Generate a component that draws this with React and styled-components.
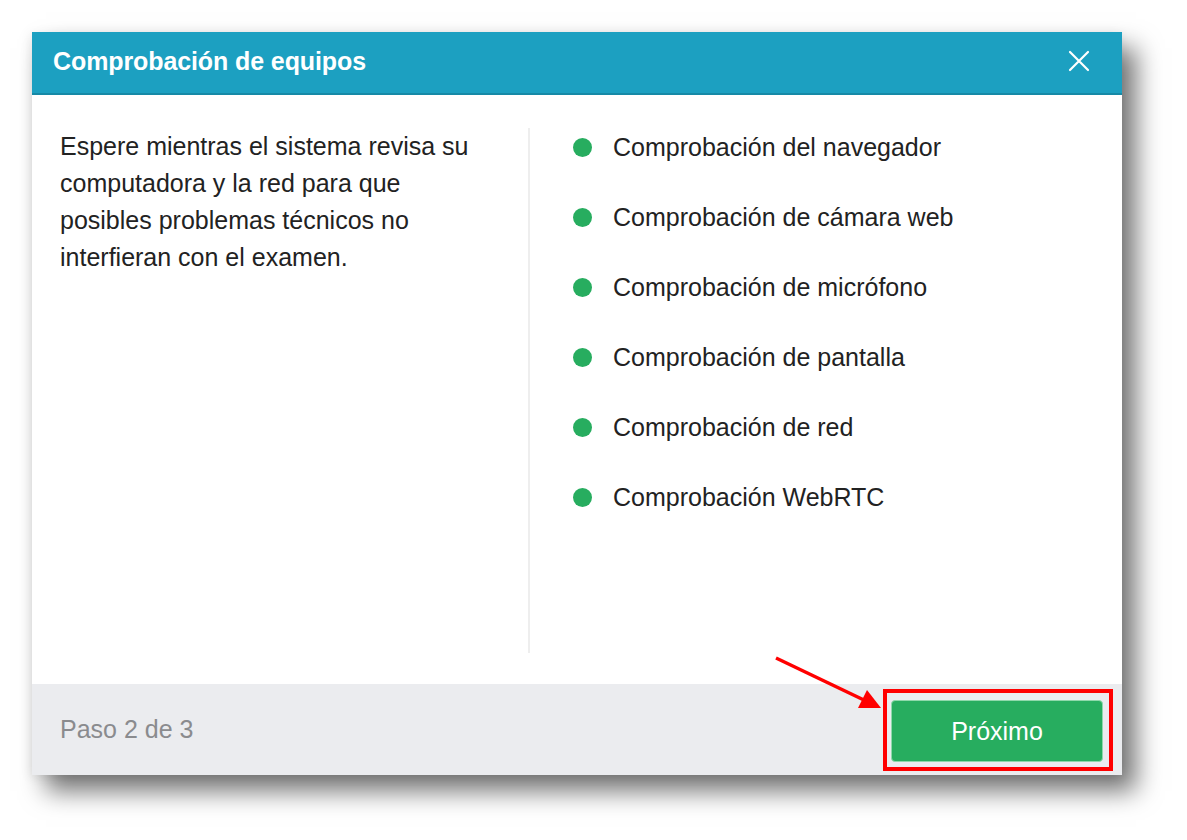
import React from 'react'
import styled, { createGlobalStyle } from 'styled-components'

const GlobalStyle = createGlobalStyle`
  html, body {
    margin: 0;
    padding: 0;
    background: #ffffff;
    font-family: "Liberation Sans", Arial, sans-serif;
  }
  * {
    box-sizing: border-box;
  }
`

const Page = styled.div`
  width: 1187px;
  height: 840px;
  padding: 32px 0 0 32px;
  position: relative;
  overflow: hidden;
`

const Modal = styled.div`
  width: 1090px;
  height: 743px;
  background: #ffffff;
  display: flex;
  flex-direction: column;
  box-shadow: 14px 16px 24px rgba(0, 0, 0, 0.55), -2px 2px 10px rgba(0, 0, 0, 0.08);
`

const Header = styled.div`
  flex: 0 0 63px;
  background: #1ca0c1;
  border-bottom: 2px solid #1689a6;
  display: flex;
  align-items: center;
  justify-content: space-between;
  padding: 0 32px 3px 21px;
  color: #ffffff;
`

const Title = styled.span`
  font-size: 25px;
  font-weight: bold;
  letter-spacing: -0.1px;
`

const CloseButton = styled.button`
  border: none;
  background: transparent;
  padding: 0;
  width: 22px;
  height: 22px;
  cursor: pointer;
  display: flex;
  svg {
    display: block;
  }
`

const Body = styled.div`
  flex: 1 1 auto;
  display: flex;
  padding: 33px 0 31px 28px;
  color: #222222;
`

const Intro = styled.p`
  margin: 0;
  width: 470px;
  padding-right: 40px;
  font-size: 25px;
  line-height: 37px;
  border-right: 2px solid #eeeeee;
`

const CheckList = styled.ul`
  list-style: none;
  margin: 0;
  padding: 0 0 0 43px;
  display: flex;
  flex-direction: column;
  gap: 32px;
`

const CheckItem = styled.li`
  display: flex;
  align-items: center;
  gap: 21px;
  height: 38px;
  font-size: 25px;
`

const Dot = styled.span`
  width: 19px;
  height: 19px;
  border-radius: 50%;
  background: ${p => p.color};
  flex: 0 0 auto;
`

const Footer = styled.div`
  flex: 0 0 91px;
  background: #ebecef;
  display: flex;
  align-items: center;
  justify-content: space-between;
  padding: 0 19px 0 28px;
`

const StepText = styled.span`
  font-size: 25px;
  color: #8a8b8e;
`

const ButtonWrap = styled.div`
  position: relative;
  margin-top: 3px;
`

const NextButton = styled.button`
  width: 212px;
  height: 62px;
  border: 1px solid #8fd9ab;
  border-radius: 4px;
  background: #27ad5f;
  color: #ffffff;
  font-family: "Liberation Sans", Arial, sans-serif;
  font-size: 25px;
  cursor: pointer;
`

const Highlight = styled.div`
  position: absolute;
  top: -11px;
  left: -8px;
  right: -10px;
  bottom: -9px;
  border: 4px solid #ff0000;
  pointer-events: none;
`

const Arrow = styled.svg`
  position: absolute;
  left: 770px;
  top: 650px;
  overflow: visible;
`

const checks = [
  'Comprobación del navegador',
  'Comprobación de cámara web',
  'Comprobación de micrófono',
  'Comprobación de pantalla',
  'Comprobación de red',
  'Comprobación WebRTC',
]

export default function App() {
  return (
    <>
      <GlobalStyle />
      <Page>
        <Modal>
          <Header>
            <Title>Comprobación de equipos</Title>
            <CloseButton aria-label="Cerrar">
              <svg width="22" height="22" viewBox="0 0 22 22">
                <path d="M2 2 L20 20 M20 2 L2 20" stroke="#ffffff" strokeWidth="2.2" strokeLinecap="round" />
              </svg>
            </CloseButton>
          </Header>
          <Body>
            <Intro>
              Espere mientras el sistema revisa su computadora y la red para que
              posibles problemas técnicos no interfieran con el examen.
            </Intro>
            <CheckList>
              {checks.map(c => (
                <CheckItem key={c}>
                  <Dot color="#27ad5f" />
                  {c}
                </CheckItem>
              ))}
            </CheckList>
          </Body>
          <Footer>
            <StepText>Paso 2 de 3</StepText>
            <ButtonWrap>
              <NextButton>Próximo</NextButton>
              <Highlight />
            </ButtonWrap>
          </Footer>
        </Modal>
        <Arrow width="115" height="62" viewBox="0 0 115 62">
          <line x1="6" y1="8" x2="96" y2="51" stroke="#ff0000" strokeWidth="3.5" />
          <polygon points="111,58 88,58 97,40" fill="#ff0000" />
        </Arrow>
      </Page>
    </>
  )
}
